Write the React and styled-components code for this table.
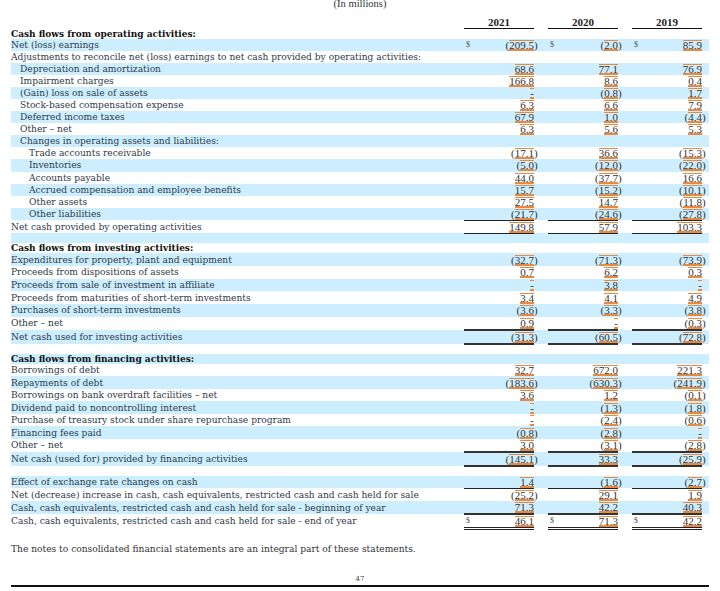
import React from 'react';
import styled, { createGlobalStyle } from 'styled-components';

const GlobalStyle = createGlobalStyle`
  html, body {
    margin: 0;
    padding: 0;
    background: #fff;
  }
  body {
    font-family: "DejaVu Serif", "Liberation Serif", serif;
    color: #333;
    font-size: 9.1px;
  }
`;

const YEARS = ['2021', '2020', '2019'];

// row height in px: 12.1 for the operating block, a little more further down
const SECTIONS = [
  { kind: 'title', label: 'Cash flows from operating activities:', shade: false },
  { label: 'Net (loss) earnings', values: ['(209.5)', '(2.0)', '85.9'], dollar: true, shade: true },
  { label: 'Adjustments to reconcile net (loss) earnings to net cash provided by operating activities:', shade: false },
  { label: 'Depreciation and amortization', indent: 1, values: ['68.6', '77.1', '76.9'], shade: true },
  { label: 'Impairment charges', indent: 1, values: ['166.8', '8.6', '0.4'], shade: false },
  { label: '(Gain) loss on sale of assets', indent: 1, values: ['-', '(0.8)', '1.7'], shade: true },
  { label: 'Stock-based compensation expense', indent: 1, values: ['6.3', '6.6', '7.9'], shade: false },
  { label: 'Deferred income taxes', indent: 1, values: ['67.9', '1.0', '(4.4)'], shade: true },
  { label: 'Other – net', indent: 1, values: ['6.3', '5.6', '5.3'], shade: false },
  { label: 'Changes in operating assets and liabilities:', indent: 1, shade: true },
  { label: 'Trade accounts receivable', indent: 2, values: ['(17.1)', '36.6', '(15.3)'], shade: false },
  { label: 'Inventories', indent: 2, values: ['(5.0)', '(12.0)', '(22.0)'], shade: true },
  { label: 'Accounts payable', indent: 2, values: ['44.0', '(37.7)', '16.6'], shade: false },
  { label: 'Accrued compensation and employee benefits', indent: 2, values: ['15.7', '(15.2)', '(10.1)'], shade: true },
  { label: 'Other assets', indent: 2, values: ['27.5', '14.7', '(11.8)'], shade: false },
  { label: 'Other liabilities', indent: 2, values: ['(21.7)', '(24.6)', '(27.8)'], shade: true, under: 'thin' },
  { label: 'Net cash provided by operating activities', values: ['149.8', '57.9', '103.3'], shade: false, under: 'thin' },
  { kind: 'blank', shade: true, size: 10 },

  { kind: 'title', label: 'Cash flows from investing activities:', shade: false },
  { label: 'Expenditures for property, plant and equipment', values: ['(32.7)', '(71.3)', '(73.9)'], shade: true, h: 12.7 },
  { label: 'Proceeds from dispositions of assets', values: ['0.7', '6.2', '0.3'], shade: false, h: 12.7 },
  { label: 'Proceeds from sale of investment in affiliate', values: ['-', '3.8', '-'], shade: true, h: 12.7 },
  { label: 'Proceeds from maturities of short-term investments', values: ['3.4', '4.1', '4.9'], shade: false, h: 12.7 },
  { label: 'Purchases of short-term investments', values: ['(3.6)', '(3.3)', '(3.8)'], shade: true, h: 12.7 },
  { label: 'Other – net', values: ['0.9', '-', '(0.3)'], shade: false, under: 'thick', h: 12.7 },
  { label: 'Net cash used for investing activities', values: ['(31.3)', '(60.5)', '(72.8)'], shade: true, under: 'thick', h: 12.7 },
  { kind: 'blank', shade: false, size: 10 },

  { kind: 'title', label: 'Cash flows from financing activities:', shade: true },
  { label: 'Borrowings of debt', values: ['32.7', '672.0', '221.3'], shade: false, h: 12.5 },
  { label: 'Repayments of debt', values: ['(183.6)', '(630.3)', '(241.9)'], shade: true, h: 12.5 },
  { label: 'Borrowings on bank overdraft facilities – net', values: ['3.6', '1.2', '(0.1)'], shade: false, h: 12.5 },
  { label: 'Dividend paid to noncontrolling interest', values: ['-', '(1.3)', '(1.8)'], shade: true, h: 12.5 },
  { label: 'Purchase of treasury stock under share repurchase program', values: ['-', '(2.4)', '(0.6)'], shade: false, h: 12.5 },
  { label: 'Financing fees paid', values: ['(0.8)', '(2.8)', '-'], shade: true, h: 12.5 },
  { label: 'Other – net', values: ['3.0', '(3.1)', '(2.8)'], shade: false, under: 'thick', h: 12.5 },
  { label: 'Net cash (used for) provided by financing activities', values: ['(145.1)', '33.3', '(25.9)'], shade: true, under: 'thick', h: 12.5 },
  { kind: 'blank', shade: false, size: 10 },

  { label: 'Effect of exchange rate changes on cash', values: ['1.4', '(1.6)', '(2.7)'], shade: true, under: 'thin', h: 12.7 },
  { label: 'Net (decrease) increase in cash, cash equivalents, restricted cash and cash held for sale', values: ['(25.2)', '29.1', '1.9'], shade: false, h: 12.7 },
  { label: 'Cash, cash equivalents, restricted cash and cash held for sale - beginning of year', values: ['71.3', '42.2', '40.3'], shade: true, under: 'thick', h: 12.7 },
  { label: 'Cash, cash equivalents, restricted cash and cash held for sale - end of year', values: ['46.1', '71.3', '42.2'], dollar: true, shade: false, under: 'double', h: 12.7 },
];

const UNDERLINES = {
  thin: '1px solid #222',
  thick: '2px solid #333',
  double: '3px double #222',
};

export default function App() {
  return (
    <Page>
      <GlobalStyle />
      <Units>(In millions)</Units>
      <Table>
        <colgroup>
          <col style={{ width: 453 }} />
          {YEARS.map((y, i) => (
            <React.Fragment key={y}>
              <col style={{ width: 70 }} />
              <col style={{ width: 5 }} />
              <col style={{ width: i === 2 ? 2 : 9 }} />
            </React.Fragment>
          ))}
        </colgroup>
        <tbody>
          <HeadRow>
            <td />
            {YEARS.map((y) => (
              <React.Fragment key={y}>
                <YearCell>{y}</YearCell>
                <td />
                <td />
              </React.Fragment>
            ))}
          </HeadRow>
          {SECTIONS.map((row, idx) => {
            if (row.kind === 'blank') {
              return (
                <BlankRow key={idx} $shade={row.shade} $size={row.size}>
                  <td colSpan={10} />
                </BlankRow>
              );
            }
            if (row.kind === 'title') {
              return (
                <TitleRow key={idx} $shade={row.shade}>
                  <TitleCell colSpan={10}>{row.label}</TitleCell>
                </TitleRow>
              );
            }
            return (
              <Row key={idx} $shade={row.shade} $h={row.h || 12.1}>
                <LabelCell $indent={row.indent || 0}>{row.label}</LabelCell>
                {YEARS.map((y, i) => {
                  const raw = row.values ? row.values[i] : null;
                  const neg = raw && raw.startsWith('(');
                  const num = raw ? raw.replace(/[()]/g, '') : null;
                  return (
                    <React.Fragment key={y}>
                      <ValueCell $under={row.under}>
                        {raw && (
                          <ValueBox>
                            <Dollar>{row.dollar ? '$' : ''}</Dollar>
                            <span>
                              {neg ? '(' : ''}
                              <Mark>{num}</Mark>
                            </span>
                          </ValueBox>
                        )}
                      </ValueCell>
                      <ParenCell>{neg ? ')' : ''}</ParenCell>
                      <td />
                    </React.Fragment>
                  );
                })}
              </Row>
            );
          })}
        </tbody>
      </Table>
      <Note>The notes to consolidated financial statements are an integral part of these statements.</Note>
      <PageNumber>47</PageNumber>
      <Rule />
    </Page>
  );
}

const Page = styled.div`
  width: 720px;
  height: 591px;
  overflow: hidden;
  padding: 0 11px;
  box-sizing: border-box;
`;

const Units = styled.div`
  text-align: center;
  line-height: 11px;
  margin-top: -2px;
  font-family: "Liberation Serif", serif;
  font-size: 10.5px;
  color: #333;
`;

const Table = styled.table`
  width: 698px;
  table-layout: fixed;
  border-collapse: collapse;
  margin-top: 6px;

  td {
    padding: 0;
  }
`;

const HeadRow = styled.tr`
  height: 13px;
`;

const YearCell = styled.td`
  text-align: center;
  font-family: "Liberation Serif", serif;
  font-size: 11px;
  font-weight: bold;
  line-height: 12px;
  vertical-align: bottom;
  border-bottom: 1.5px solid #111;
  color: #222;
`;

const Row = styled.tr`
  background: ${({ $shade }) => ($shade ? '#cceeff' : '#fff')};
  height: ${({ $h }) => $h}px;
`;

const TitleRow = styled.tr`
  background: ${({ $shade }) => ($shade ? '#cceeff' : '#fff')};
  height: 10px;
`;

const BlankRow = styled.tr`
  background: ${({ $shade }) => ($shade ? '#cceeff' : '#fff')};
  height: ${({ $size }) => $size}px;
`;

const TitleCell = styled.td`
  font-weight: bold;
  font-size: 9px;
  color: #111;
  line-height: 10px;
  white-space: nowrap;
`;

const LabelCell = styled.td`
  padding-left: ${({ $indent }) => $indent * 9}px !important;
  line-height: 12px;
  white-space: nowrap;
  color: #2e3a48;
`;

const ValueCell = styled.td`
  line-height: 12px;
  font-family: "Liberation Serif", serif;
  font-size: 11px;
  border-bottom: ${({ $under }) => ($under ? UNDERLINES[$under] : 'none')};
`;

const ValueBox = styled.div`
  display: flex;
  justify-content: space-between;
  align-items: center;
  text-align: right;
  color: #333;
`;

const Dollar = styled.span`
  font-size: 8px;
  color: #555;
  padding-left: 2px;
`;

const Mark = styled.span`
  display: inline-block;
  line-height: 8px;
  border-top: 1.5px solid #e8893f;
  border-bottom: 2px solid #e8893f;
`;

const ParenCell = styled.td`
  line-height: 12px;
  font-family: "Liberation Serif", serif;
  font-size: 11px;
  text-align: left;
  color: #333;
`;

const Note = styled.div`
  margin-top: 13px;
  line-height: 12px;
  color: #333;
`;

const PageNumber = styled.div`
  text-align: center;
  font-size: 7px;
  line-height: 8px;
  margin-top: 20px;
  color: #444;
`;

const Rule = styled.div`
  height: 2px;
  background: #111;
  margin-top: 2px;
`;
